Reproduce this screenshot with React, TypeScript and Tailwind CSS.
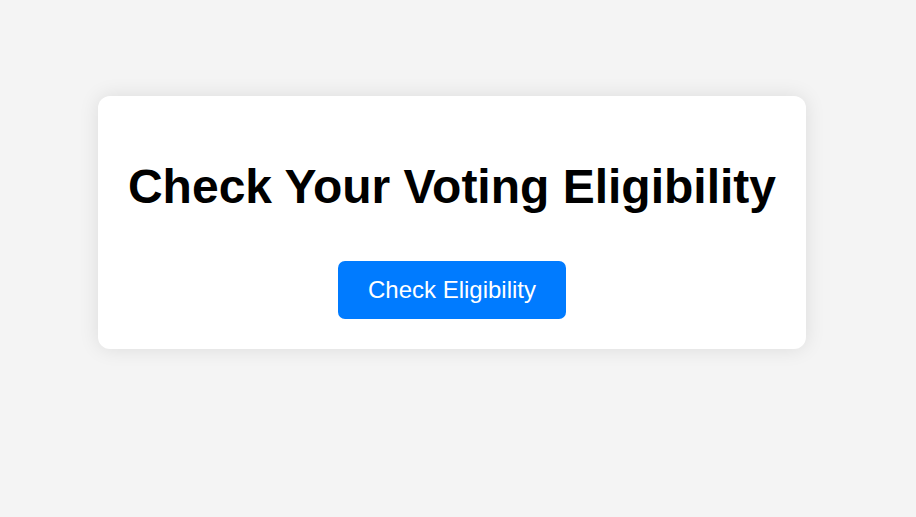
export default function App() {
  return (
    <div className="flex min-h-screen items-center justify-center bg-[#f4f4f4] pr-3 pb-18 font-['Liberation_Sans',Arial,sans-serif]">
      <main className="rounded-xl bg-white px-[30px] pt-[62px] pb-[30px] text-center shadow-[0_0_20px_rgba(0,0,0,0.1)]">
        <h1 className="text-5xl leading-[58px] font-bold text-black">Check Your Voting Eligibility</h1>
        <button
          type="button"
          className="mt-[45px] cursor-pointer rounded-[7px] bg-[#007bff] px-[30px] py-[15px] text-2xl leading-7 text-white hover:bg-[#0056b3]"
        >
          Check Eligibility
        </button>
      </main>
    </div>
  );
}
